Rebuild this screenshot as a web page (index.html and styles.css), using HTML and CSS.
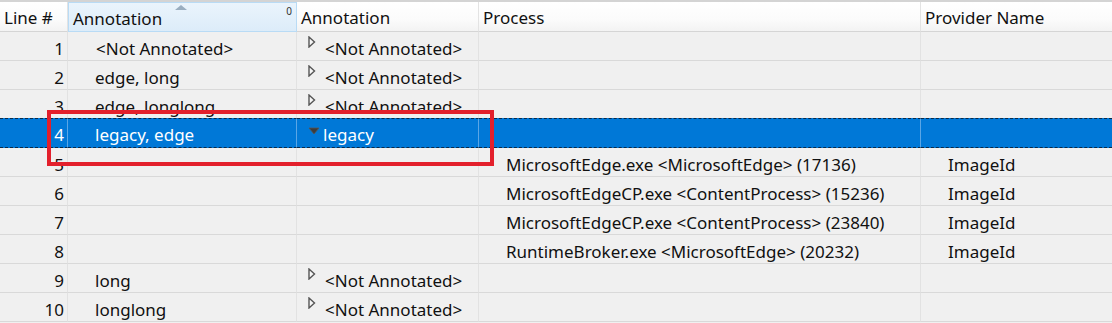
FILE: index.html
```html
<!DOCTYPE html>
<html>
<head>
<meta charset="utf-8">
<link rel="stylesheet" href="styles.css">
</head>
<body>
<div class="wrap">
  <div class="grid">
    <div class="hd">Line #</div>
    <div class="hd sorted">Annotation<span class="sort-arrow"></span><span class="sort-num">0</span></div>
    <div class="hd">Annotation</div>
    <div class="hd">Process</div>
    <div class="hd last">Provider Name</div>

    <div class="c num">1</div><div class="c a1 na">&lt;Not Annotated&gt;</div><div class="c a2"><svg class="tri" width="8" height="12" viewBox="0 0 8 12"><polygon points="1,1 6.5,6 1,11" fill="#f7f7f7" stroke="#555" stroke-width="1.4"/></svg>&lt;Not Annotated&gt;</div><div class="c"></div><div class="c last"></div>
    <div class="c num">2</div><div class="c a1">edge, long</div><div class="c a2"><svg class="tri" width="8" height="12" viewBox="0 0 8 12"><polygon points="1,1 6.5,6 1,11" fill="#f7f7f7" stroke="#555" stroke-width="1.4"/></svg>&lt;Not Annotated&gt;</div><div class="c"></div><div class="c last"></div>
    <div class="c num">3</div><div class="c a1">edge, longlong</div><div class="c a2"><svg class="tri" width="8" height="12" viewBox="0 0 8 12"><polygon points="1,1 6.5,6 1,11" fill="#f7f7f7" stroke="#555" stroke-width="1.4"/></svg>&lt;Not Annotated&gt;</div><div class="c"></div><div class="c last"></div>
    <div class="c num sel">4</div><div class="c a1 sel">legacy, edge</div><div class="c a2 sel"><svg class="tri-down" width="12" height="8" viewBox="0 0 12 8"><polygon points="1,1 11,1 6,7" fill="#3c3c3c" stroke="#555" stroke-width="0.8"/></svg>legacy</div><div class="c sel"></div><div class="c last sel"></div>
    <div class="c num">5</div><div class="c a1"></div><div class="c a2"></div><div class="c proc">MicrosoftEdge.exe &lt;MicrosoftEdge&gt; (17136)</div><div class="c last prov">ImageId</div>
    <div class="c num">6</div><div class="c a1"></div><div class="c a2"></div><div class="c proc">MicrosoftEdgeCP.exe &lt;ContentProcess&gt; (15236)</div><div class="c last prov">ImageId</div>
    <div class="c num">7</div><div class="c a1"></div><div class="c a2"></div><div class="c proc">MicrosoftEdgeCP.exe &lt;ContentProcess&gt; (23840)</div><div class="c last prov">ImageId</div>
    <div class="c num">8</div><div class="c a1"></div><div class="c a2"></div><div class="c proc">RuntimeBroker.exe &lt;MicrosoftEdge&gt; (20232)</div><div class="c last prov">ImageId</div>
    <div class="c num">9</div><div class="c a1">long</div><div class="c a2"><svg class="tri" width="8" height="12" viewBox="0 0 8 12"><polygon points="1,1 6.5,6 1,11" fill="#f7f7f7" stroke="#555" stroke-width="1.4"/></svg>&lt;Not Annotated&gt;</div><div class="c"></div><div class="c last"></div>
    <div class="c num">10</div><div class="c a1">longlong</div><div class="c a2"><svg class="tri" width="8" height="12" viewBox="0 0 8 12"><polygon points="1,1 6.5,6 1,11" fill="#f7f7f7" stroke="#555" stroke-width="1.4"/></svg>&lt;Not Annotated&gt;</div><div class="c"></div><div class="c last"></div>
  </div>
  <div class="redbox"></div>
</div>
</body>
</html>
```

FILE: styles.css
```css
* { box-sizing: border-box; }
html, body { margin: 0; padding: 0; background: #f0f0f0; }
body {
  font-family: "Noto Sans", "Open Sans", sans-serif;
  font-size: 17px;
  color: #111111;
  width: 1112px;
  height: 323px;
  overflow: hidden;
}
.wrap {
  position: relative;
  border-top: 2px solid #d4d4d4;
}
.grid {
  display: grid;
  grid-template-columns: 68px 229px 182px 442px 191px;
  grid-template-rows: 30px repeat(10, 29px);
}
.hd {
  position: relative;
  background: linear-gradient(#ffffff, #fbfbfb 60%, #f3f3f3);
  border-right: 1px solid #e3e3e3;
  border-bottom: 1px solid #d5d5d5;
  padding-left: 4px;
  padding-top: 2px;
  display: flex;
  align-items: center;
  white-space: nowrap;
  overflow: hidden;
}
.hd.sorted {
  background: linear-gradient(#eaf4fc, #dcecf9);
  border: 1px solid #b9dbf5;
  padding-left: 4px;
}
.sort-arrow {
  position: absolute;
  left: 106px;
  top: 2px;
  width: 0; height: 0;
  border-left: 6px solid transparent;
  border-right: 6px solid transparent;
  border-bottom: 5px solid #9aaec0;
}
.sort-num {
  position: absolute;
  right: 4px;
  top: 1px;
  font-size: 10px;
  color: #333;
}
.hd.last, .c.last { border-right: none; }
.c {
  border-right: 1px solid #e2e2e2;
  border-bottom: 1px solid #d9d9d9;
  display: flex;
  align-items: center;
  white-space: nowrap;
  overflow: hidden;
  padding-top: 4px;
}
.num { justify-content: flex-end; padding-right: 3px; }
.a1 { padding-left: 27px; }
.a1.na { padding-left: 28px; }
.a2 { padding-left: 11px; }
.proc { padding-left: 27px; }
.prov { padding-left: 27px; }
.tri {
  flex: none;
  margin-right: 9px;
  position: relative;
  top: -6px;
}
.tri-down {
  flex: none;
  margin-right: 3px;
  position: relative;
  top: -4px;
}
.sel {
  background: #0078d7;
  color: #ffffff;
  border-right-color: #5aa6e6;
  border-top: 1px dashed #0a2a4a;
  border-bottom: 1px dashed #0a2a4a;
  margin-top: -1px;
  padding-top: 3px;
}
.redbox {
  position: absolute;
  left: 47px;
  top: 108px;
  width: 447px;
  height: 56px;
  border: 4px solid #e3202c;
}
```
